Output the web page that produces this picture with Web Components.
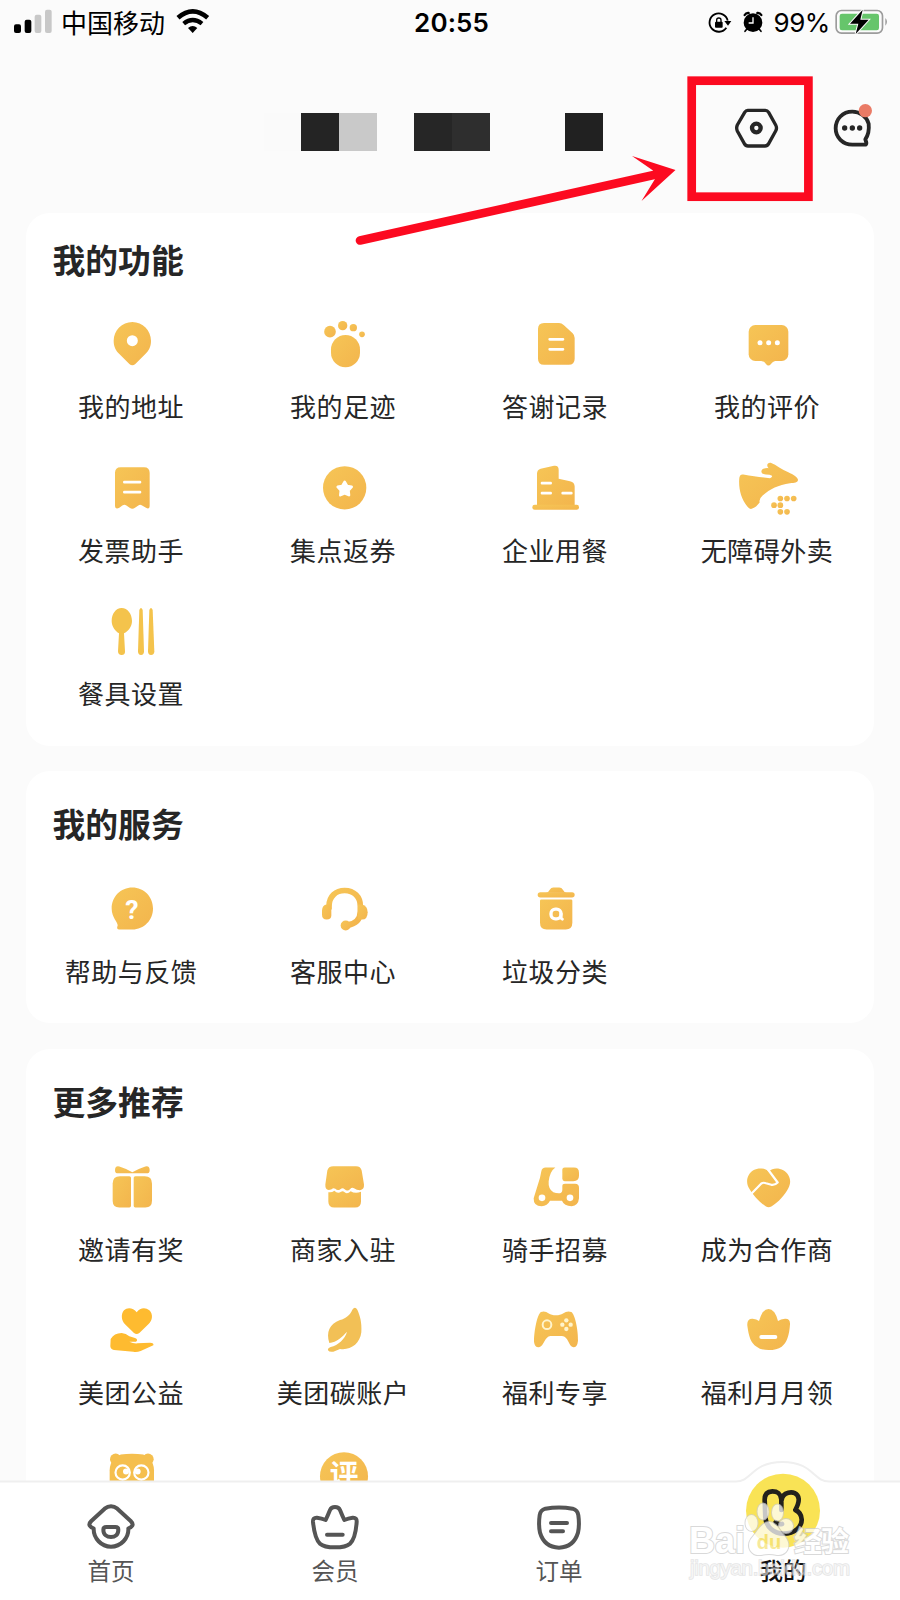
<!DOCTYPE html>
<html lang="zh-CN">
<head>
<meta charset="utf-8">
<title>我的</title>
<style>
  html, body {
    margin: 0;
    background: #fbfbfb;
  }

  body {
    font-family: "Noto Sans CJK SC", sans-serif;
    color: #262626;
  }
</style>
</head>
<body>
<profile-page>
  <status-bar slot="status" carrier="中国移动" time="20:55" battery="99%"></status-bar>
  <profile-header slot="header"></profile-header>

  <menu-card heading="我的功能" style="--card-top: 22px">
    <menu-item icon="pin">我的地址</menu-item>
    <menu-item icon="foot">我的足迹</menu-item>
    <menu-item icon="note">答谢记录</menu-item>
    <menu-item icon="comment">我的评价</menu-item>
    <menu-item icon="invoice">发票助手</menu-item>
    <menu-item icon="coin">集点返券</menu-item>
    <menu-item icon="building">企业用餐</menu-item>
    <menu-item icon="access">无障碍外卖</menu-item>
    <menu-item icon="utensils">餐具设置</menu-item>
  </menu-card>

  <menu-card heading="我的服务">
    <menu-item icon="help">帮助与反馈</menu-item>
    <menu-item icon="headset">客服中心</menu-item>
    <menu-item icon="trash">垃圾分类</menu-item>
  </menu-card>

  <menu-card heading="更多推荐">
    <menu-item icon="gift">邀请有奖</menu-item>
    <menu-item icon="shop">商家入驻</menu-item>
    <menu-item icon="scooter">骑手招募</menu-item>
    <menu-item icon="heart">成为合作商</menu-item>
    <menu-item icon="charity">美团公益</menu-item>
    <menu-item icon="leaf">美团碳账户</menu-item>
    <menu-item icon="gamepad">福利专享</menu-item>
    <menu-item icon="crown">福利月月领</menu-item>
    <menu-item icon="panda"></menu-item>
    <menu-item icon="review"></menu-item>
  </menu-card>

  <tab-bar slot="tabs">
    <tab-item icon="home">首页</tab-item>
    <tab-item icon="member">会员</tab-item>
    <tab-item icon="order">订单</tab-item>
    <tab-item icon="mine" active>我的</tab-item>
  </tab-bar>

  <pointer-note slot="overlay"></pointer-note>
  <site-watermark slot="overlay"></site-watermark>
</profile-page>

<script>
// name: [viewBox, markup]. Shapes take the golden gradient unless they set a fill.
const ICONS = {
  pin: ["180 36 192 192", `
    <path d="M277 66C246 66 221 91 221 122C221 140 228 152 238 162L268 192Q277 200 286 192L316 162C326 152 333 140 333 122C333 91 308 66 277 66Z"/>
    <circle cx="277" cy="122" r="16.5" fill="#fff"/>`],
  foot: ["816 36 192 192", `
    <circle cx="870" cy="95" r="17.5"/><circle cx="908" cy="77" r="14"/>
    <circle cx="940" cy="83" r="11"/><circle cx="966" cy="103" r="8.5"/>
    <rect x="873" y="105" width="87" height="97" rx="43.5"/>`],
  note: ["192 36 192 192", `
    <path d="M252 69H297Q305 69 311 75L338 100Q344 106 344 114V176Q344 194 326 194H252Q234 194 234 176V87Q234 69 252 69Z"/>
    <path d="M269 118H309M269 148H309" class="cut" stroke-width="8"/>`],
  comment: ["828 36 192 192", `
    <rect x="866" y="75" width="119" height="108" rx="20"/>
    <path d="M900 182Q912 183 918 192Q925 201 933 192Q938 183 952 182Z"/>
    <g fill="#fff"><circle cx="900" cy="128" r="7.5"/><circle cx="926" cy="128" r="7.5"/><circle cx="952" cy="128" r="7.5"/></g>`],
  invoice: ["180 466.5 192 192", `
    <path d="M242 500H312Q329 500 329 517V615Q329 628 318 622L305 614Q300 611 295 615L285 622Q277 628 269 622L258 614Q253 611 247 615L238 622Q225 628 225 615V517Q225 500 242 500Z"/>
    <path d="M253 545H300M253 575H300" class="cut" stroke-width="8"/>`],
  coin: ["816 466.5 192 192", `
    <circle cx="914" cy="562" r="65"/>
    <path d="M914 544L921 556.3L934.9 559.2L925.4 569.7L926.9 583.8L914 578L901.1 583.8L902.6 569.7L893.1 559.2L907 556.3Z" fill="#fff" stroke="#fff" stroke-width="8" stroke-linejoin="round"/>`],
  building: ["192 466.5 192 192", `
    <path d="M231 616V520Q231 508 242 505L282 496Q296 494 296 508V535L330 542Q344 545 344 558V616Z"/>
    <rect x="217" y="613" width="140" height="15" rx="7"/>
    <path d="M246 548H272M246 578H272M308 578H334" class="cut" stroke-width="8"/>`],
  access: ["828 466.5 192 192", `
    <path d="M850 522C880 528 905 530 930 533Q938 530 936 526Q930 522 918 522C903 522 900 510 910 505Q918 502 926 503C918 494 922 486 932 487C950 494 965 508 985 515C1000 522 1014 530 1014 538C1014 546 1003 548 990 548C955 553 930 565 908 585Q896 595 899 606C892 615 885 622 875 625Q868 627 862 618C842 595 835 560 838 532Q840 520 850 522Z"/>
    <circle cx="961" cy="594" r="8.5"/><circle cx="981" cy="594" r="8.5"/><circle cx="1001" cy="594" r="8.5"/>
    <circle cx="942" cy="614" r="8.5"/><circle cx="961" cy="614" r="8.5"/>
    <circle cx="961" cy="634" r="8.5"/><circle cx="981" cy="634" r="8.5"/>`],
  utensils: ["240 27 192 192", `
    <g fill="#f4c34c">
      <path d="M305 54C287 54 275 72 275 93C275 110 286 124 297 130L294 184Q294 195 305 195Q316 195 315 184L312 130C325 124 336 110 336 93C336 72 323 54 305 54Z"/>
      <path d="M358 60Q363 48 368 60L372 184Q372 195 363 195Q354 195 354 184Z"/>
      <path d="M388 60Q393 48 398 60L403 184Q403 195 393 195Q384 195 384 184Z"/>
    </g>`],
  help: ["180 52.5 192 192", `
    <path d="M277 84C312 84 339 112 339 147C339 182 312 210 277 210H238Q228 210 233 198C234 188 215 175 215 147C215 112 242 84 277 84Z"/>
    <text x="276" y="179" font-family="Roboto, sans-serif" font-weight="700" font-size="80" text-anchor="middle" fill="#fff">?</text>`],
  headset: ["816 52.5 192 192", `
    <path d="M867 150V140C867 110 888 93 914 93C942 93 961 112 961 140V155C961 182 945 194 920 197" fill="none" stroke="url(#gold)" stroke-width="17"/>
    <path d="M846 152Q847 137 860 135H874V168Q874 180 860 180Q846 180 846 166Z"/>
    <path d="M954 135H966Q983 140 983 158Q983 180 966 180H954Z"/>
    <circle cx="917" cy="198" r="15"/>`],
  trash: ["1452 52.5 192 192", `
    <rect x="1493" y="98" width="111" height="16" rx="8"/>
    <path d="M1518 100Q1526 98 1530 90Q1533 84 1540 84H1558Q1565 84 1568 90Q1572 98 1580 100Z"/>
    <path d="M1504 120H1593Q1597 120 1597 124V190Q1597 210 1577 210H1520Q1500 210 1500 190V124Q1500 120 1504 120Z"/>
    <rect x="1533" y="149" width="30" height="29" rx="13" fill="none" stroke="#fff" stroke-width="10"/>
    <path d="M1563 162V176L1567 179" class="cut" stroke-width="9"/>`],
  gift: ["180 46.5 192 192", `
    <path d="M240 101Q225 104 225 92Q225 78 238 81Q260 88 277 98Q295 88 316 81Q329 78 329 92Q329 104 314 101Z"/>
    <path d="M240 110H268Q273 110 273 115V199Q273 204 268 204H238Q218 204 218 184V132Q218 110 240 110Z"/>
    <path d="M314 110H286Q281 110 281 115V199Q281 204 286 204H316Q336 204 336 184V132Q336 110 314 110Z"/>`],
  shop: ["816 46.5 192 192", `
    <path d="M880 80H948Q962 80 965 93L972 135Q973 150 960 152Q950 152 942 146Q935 143 930 149Q922 157 914 149Q908 144 901 149Q893 155 886 148Q880 144 875 149Q855 157 856 135L862 93Q865 80 880 80Z"/>
    <path d="M865 158Q875 160 883 154Q893 164 903 157Q908 153 914 158Q922 165 932 155Q945 164 963 157V186Q963 204 945 204H883Q865 204 865 186Z"/>`],
  scooter: ["192 46.5 192 192", `
    <path d="M257 84H286Q270 95 266 125Q264 148 280 158Q290 162 300 161Q307 160 307 150V140Q307 133 315 133H345Q357 133 357 145V176Q355 198 335 200Q312 200 306 184H270Q262 200 245 200Q220 200 221 176L240 115L244 95Q246 84 257 84Z"/>
    <path d="M307 90Q307 84 314 84H342Q357 84 357 100V108Q357 125 340 125H314Q307 125 307 118Z"/>
    <circle cx="246" cy="175" r="10" fill="#fff"/><circle cx="330" cy="175" r="10" fill="#fff"/>`],
  heart: ["828 46.5 192 192", `
    <path d="M926 96C915 85 895 84 880 92C860 104 856 130 868 148C880 168 900 190 918 201Q926 205 934 201C955 188 975 166 985 146C996 126 990 104 970 92C955 84 937 85 926 96Z"/>
    <path d="M874 163L904 132Q910 128 918 131L934 136Q944 138 953 129L924 90" class="cut" stroke-width="6.500"/>`],
  charity: ["180 477 192 192", `
    <g fill="#febb30">
      <path d="M290 520C280 506 262 504 252 514C242 526 244 545 255 556L282 582Q290 588 298 582L325 556C338 545 340 526 328 514C316 504 300 506 290 520Z"/>
      <path d="M212 600Q222 582 245 582Q258 583 268 592L285 597Q296 602 288 608H268Q280 614 292 613L330 611Q343 612 340 619L302 636Q290 640 280 638L222 633Q212 632 211 622Z"/>
    </g>`],
  leaf: ["816 477 192 192", `
    <path fill="#f2c056" d="M937 512Q945 500 952 512C960 530 966 550 964 580C960 615 930 635 900 630L880 638Q868 640 864 634Q862 628 872 624C895 618 915 600 921 578C908 592 890 610 868 612C858 580 868 555 900 543C918 538 930 528 937 512Z"/>`],
  gamepad: ["192 477 192 192", `
    <path d="M243 519C260 512 265 529 288 529C310 529 316 512 334 519C345 525 355 575 354 605Q352 625 340 625C325 622 325 590 305 591H272C255 590 252 622 237 625Q224 626 222 608C222 575 232 525 243 519Z"/>
    <circle cx="261" cy="557" r="13" fill="none" stroke="#fff4cc" stroke-width="6"/>
    <g fill="#fff4cc"><circle cx="319" cy="544" r="6.5"/><circle cx="319" cy="570" r="6.5"/><circle cx="307" cy="557" r="6.500"/><circle cx="332" cy="557" r="6.500"/></g>`],
  crown: ["828 477 192 192", `
    <path d="M862 560Q860 538 878 539Q890 540 897 546Q902 530 908 520Q926 500 943 520Q950 530 954 546Q962 540 975 539Q991 538 990 556C988 590 980 612 965 623Q950 633 926 633Q902 633 890 623C872 612 866 590 862 560Z"/>
    <path d="M904 594H946" class="cut" stroke-width="12"/>`],
  panda: ["300 37.5 192 192", `
    <g fill="#f5bf4e">
      <circle cx="347" cy="89" r="17"/><circle cx="444" cy="89" r="17"/>
      <path d="M329 200V122Q329 104 340 90L362 75Q396 70 430 75L451 90Q462 104 462 122V200Z"/>
    </g>
    <g fill="none" stroke="#fff" stroke-width="6.500"><circle cx="368" cy="129" r="21.500"/><circle cx="424" cy="129" r="21.500"/></g>
    <circle cx="378" cy="126" r="9" fill="#fff"/><circle cx="413" cy="126" r="9" fill="#fff"/>`],
  review: ["936 37.5 192 192", `
    <circle cx="1032" cy="140" r="72"/>
    <text x="1032" y="166" font-weight="700" font-size="86" text-anchor="middle" fill="#fff">评</text>`],

  home: ["243 198 180 180", `
    <g fill="none" stroke="#555" stroke-width="12" stroke-linejoin="round">
      <path d="M333 229Q343 229 352 236L392 273Q401 282 396 288Q393 293 385 295C387 325 362 350 333 350C304 350 280 325 281 295Q273 293 270 288Q265 282 274 273L314 236Q323 229 333 229Z"/>
      <path d="M319 291H346Q355 291 355 299C355 314 345 321 333 321C321 321 310 314 310 299Q310 291 319 291Z"/>
    </g>`],
  member: ["915 198 180 180", `
    <g fill="none" stroke="#555" stroke-width="12" stroke-linejoin="round" stroke-linecap="round">
      <path d="M1005 231Q1016 231 1020 240Q1026 255 1033 270Q1045 265 1058 263Q1071 262 1070 276C1068 305 1062 330 1050 341Q1038 352 1005 352Q972 352 960 341C948 330 942 305 939 276Q938 262 951 263Q965 265 977 270Q984 255 990 240Q994 231 1005 231Z"/>
      <path d="M981 314H1028"/>
    </g>`],
  order: ["236 198 180 180", `
    <g fill="none" stroke="#555" stroke-width="12" stroke-linecap="round">
      <path d="M285 236Q326 229 367 236Q382 240 384 256Q388 285 383 308Q370 352 326 353Q282 352 269 308Q264 285 268 256Q270 240 285 236Z"/>
      <path d="M302 279H350M302 304H338"/>
    </g>`],
  mine: ["908 198 180 180", `
    <circle cx="998" cy="242" r="111" fill="#f9e355"/>
    <g fill="none" stroke="#22211c" stroke-width="14" stroke-linecap="round" stroke-linejoin="round">
      <path d="M993 240V208C990 190 982 184 966 184C950 184 943 194 943 209L945 262C947 290 970 311 1000 311C1034 311 1055 290 1054 268C1053 254 1047 245 1035 240C1043 225 1046 215 1045 206C1043 188 1026 185 1014 188C1002 191 995 198 994 210"/>
      <path d="M976 277Q985 285 995 282"/>
    </g>`],

  signal: ["42 27 114 75", `
    <rect x="42" y="73" width="21" height="26" rx="6" fill="#000"/>
    <rect x="74" y="59" width="20" height="40" rx="6" fill="#000"/>
    <rect x="104" y="44" width="20" height="55" rx="6" fill="#c8c8c8"/>
    <rect x="135" y="29" width="20" height="70" rx="6" fill="#c8c8c8"/>`],
  wifi: ["528 24 102 78", `
    <g fill="none" stroke="#000">
      <path d="M534 53Q578 15 623 53" stroke-width="14"/>
      <path d="M551 71Q578 49 606 71" stroke-width="13"/>
    </g>
    <path d="M564 84Q578 72 592 84L578 99Z" fill="#000"/>`],
  lock: ["774 33 72 72", `
    <path d="M829 83A27.500 27.500 0 1 1 833 62" fill="none" stroke="#000" stroke-width="5.500"/>
    <path d="M823 63H844L834 77Z" fill="#000"/>
    <rect x="795" y="65" width="23" height="18" rx="3" fill="#000"/>
    <path d="M800 66V60Q800 54 806.500 54Q813 54 813 60V66" fill="none" stroke="#000" stroke-width="4"/>`],
  alarm: ["876 33 66 66", `
    <circle cx="909" cy="68" r="28" fill="#000"/>
    <g fill="none" stroke="#000" stroke-width="7" stroke-linecap="round"><path d="M884 45Q888 38 896 39M934 45Q930 38 922 39"/><path d="M890 88L885 94M928 88L933 94" stroke-width="5"/></g>
    <path d="M909 52V69H896" fill="none" stroke="#fff" stroke-width="4"/>`],
  battery: ["1155 24 162 81", `
    <rect x="1158.500" y="31.500" width="139" height="68" rx="16" fill="none" stroke="#9c9c9c" stroke-width="5"/>
    <rect x="1169" y="41" width="118" height="50" rx="7" fill="#66c56b"/>
    <path d="M1306 54Q1316 65 1306 77Z" fill="#9c9c9c"/>
    <path d="M1238 29L1200 71H1225L1217 102L1256 59H1231Z" fill="#000" stroke="#fbfbfb" stroke-width="6" paint-order="stroke"/>`],
  settings: ["854 321 132 126", `
    <path d="M892 331H945Q951 331 955 337L976 375Q981 384 976 393L955 431Q951 438 944 438H893Q886 438 882 431L861 393Q857 384 861 375L883 337Q887 331 892 331Z" fill="none" stroke="#262626" stroke-width="10"/>
    <circle cx="918" cy="384" r="13" fill="none" stroke="#262626" stroke-width="13"/>`],
  message: ["1149 309 120 135", `
    <path d="M1256 371C1250 350 1230 335 1207 335C1178 335 1157 357 1157 385C1157 412 1178 434 1207 434H1244Q1250 434 1249 428L1246 418C1255 405 1258 390 1256 371Z" fill="none" stroke="#262626" stroke-width="11.500" stroke-linejoin="round"/>
    <circle cx="1184" cy="384" r="8" fill="#262626"/><circle cx="1207" cy="384" r="8" fill="#262626"/><circle cx="1229" cy="384" r="8" fill="#262626"/>
    <circle cx="1246" cy="332" r="20" fill="#ea7b66"/>`],
};

class AppIcon extends HTMLElement {
  connectedCallback() {
    const [viewBox, markup] = ICONS[this.getAttribute("name")];
    this.attachShadow({ mode: "open" }).innerHTML = `
      <style>
        :host {
          display: block;
          flex: none;
        }

        svg {
          display: block;
          width: 100%;
          height: 100%;
          overflow: visible;
        }

        .cut {
          fill: none;
          stroke: #fff;
          stroke-linecap: round;
          stroke-linejoin: round;
        }
      </style>
      <svg viewBox="${viewBox}" fill="url(#gold)" aria-hidden="true">
        <defs>
          <linearGradient id="gold" x1="0" y1="0" x2="1" y2="1">
            <stop offset="0" stop-color="#f6c556"/>
            <stop offset="1" stop-color="#f3b54d"/>
          </linearGradient>
        </defs>
        ${markup}
      </svg>
    `;
  }
}

class ProfilePage extends HTMLElement {
  constructor() {
    super();
    this.attachShadow({ mode: "open" }).innerHTML = `
      <style>
        :host {
          position: relative;
          display: flex;
          flex-direction: column;
          width: 900px;
          height: 1600px;
          overflow: hidden;
          background: #fbfbfb;
        }

        main {
          display: flex;
          flex: 1;
          flex-direction: column;
          gap: 25.75px;
          min-height: 0;
          padding: 0 26px;
          overflow: hidden;
        }
      </style>
      <slot name="status"></slot>
      <slot name="header"></slot>
      <main><slot></slot></main>
      <slot name="tabs"></slot>
      <slot name="overlay"></slot>
    `;
  }
}

class StatusBar extends HTMLElement {
  connectedCallback() {
    this.attachShadow({ mode: "open" }).innerHTML = `
      <style>
        :host {
          display: grid;
          grid-template-columns: 1fr auto 1fr;
          align-items: center;
          flex: none;
          height: 46px;
          padding: 0 11px 0 14px;
          box-sizing: border-box;
          color: #000;
          line-height: 46px;
        }

        div {
          display: flex;
          align-items: center;
        }

        .carrier {
          margin: -2px 11px 0 9px;
          font-size: 26px;
        }

        .time {
          font: 600 26px/46px Inter, sans-serif;
          letter-spacing: 0.1px;
        }

        .end {
          justify-content: flex-end;
        }

        .level {
          margin: 0 5px 0 9px;
          font: 400 26px/46px Inter, sans-serif;
          letter-spacing: -0.4px;
        }
      </style>
      <div>
        <app-icon name="signal" style="width: 38px; height: 25px; margin-top: -3px"></app-icon>
        <span class="carrier">${this.getAttribute("carrier")}</span>
        <app-icon name="wifi" style="width: 34px; height: 26px; margin-top: -4px"></app-icon>
      </div>
      <span class="time">${this.getAttribute("time")}</span>
      <div class="end">
        <app-icon name="lock" style="width: 24px; height: 24px"></app-icon>
        <app-icon name="alarm" style="width: 22px; height: 22px; margin-left: 10px; margin-top: -2px"></app-icon>
        <span class="level">${this.getAttribute("battery")}</span>
        <app-icon name="battery" style="width: 54px; height: 27px; margin-top: -3px"></app-icon>
      </div>
    `;
  }
}

class ProfileHeader extends HTMLElement {
  connectedCallback() {
    // pixelated name, one entry per tile
    const tiles = ["#fafafa", "#242424", "#c9c9c9", "", "#262626", "#2e2e2e", "", "", "#212121"];
    this.attachShadow({ mode: "open" }).innerHTML = `
      <style>
        :host {
          display: flex;
          flex: none;
          align-items: flex-start;
          height: 166.5px;
          padding: 57px 0 0 263.5px;
          box-sizing: border-box;
        }

        .name {
          display: flex;
          margin-top: 10px;
        }

        .name i {
          width: 37.7px;
          height: 38px;
        }
      </style>
      <div class="name">${tiles.map((c) => `<i style="background: ${c || "none"}"></i>`).join("")}</div>
      <app-icon name="settings" style="width: 44px; height: 42px; margin: 4px 0 0 132px"></app-icon>
      <app-icon name="message" style="width: 40px; height: 45px; margin-left: 54px"></app-icon>
    `;
  }
}

class MenuCard extends HTMLElement {
  connectedCallback() {
    this.attachShadow({ mode: "open" }).innerHTML = `
      <style>
        :host {
          display: block;
          flex: none;
          padding: var(--card-top, 28px) 0 33.5px;
          background: #fff;
          border-radius: 24px;
        }

        h2 {
          margin: 0 0 29.5px 26.5px;
          font-size: 32.8px;
          font-weight: 700;
          line-height: 48px;
        }

        .grid {
          display: grid;
          grid-template-columns: repeat(4, 1fr);
          row-gap: 30.5px;
        }
      </style>
      <h2>${this.getAttribute("heading")}</h2>
      <div class="grid"><slot></slot></div>
    `;
  }
}

class MenuItem extends HTMLElement {
  connectedCallback() {
    this.attachShadow({ mode: "open" }).innerHTML = `
      <style>
        :host {
          display: flex;
          flex-direction: column;
          align-items: center;
          gap: 11px;
        }

        app-icon {
          width: 64px;
          height: 64px;
        }

        span {
          height: 38px;
          padding-right: 2px;
          font-size: 26px;
          line-height: 37px;
          letter-spacing: 0.5px;
          white-space: nowrap;
        }
      </style>
      <app-icon name="${this.getAttribute("icon")}"></app-icon>
      <span><slot></slot></span>
    `;
  }
}

class TabBar extends HTMLElement {
  connectedCallback() {
    this.attachShadow({ mode: "open" }).innerHTML = `
      <style>
        :host {
          position: relative;
          display: block;
          flex: none;
          height: 119px;
          background: #fff;
        }

        .edge {
          position: absolute;
          left: 0;
          top: -22px;
        }

        nav {
          position: relative;
          display: grid;
          grid-template-columns: repeat(4, 224px);
          margin-left: -1px;
          padding-top: 15px;
        }
      </style>
      <svg class="edge" width="900" height="30" viewBox="0 1459 900 30" aria-hidden="true">
        <path d="M-2 1481.500H736C752 1481.500 752 1462 782.500 1462C813 1462 813 1481.500 829 1481.500H902V1495H-2Z" fill="#fff" stroke="#efefef" stroke-width="2"/>
      </svg>
      <nav><slot></slot></nav>
    `;
  }
}

class TabItem extends HTMLElement {
  connectedCallback() {
    this.attachShadow({ mode: "open" }).innerHTML = `
      <style>
        :host {
          display: flex;
          flex-direction: column;
          align-items: center;
          color: #555;
        }

        :host([active]) {
          color: #111;
          font-weight: 500;
        }

        app-icon {
          width: 60px;
          height: 60px;
        }

        span {
          font-size: 23.5px;
          line-height: 28px;
        }
      </style>
      <app-icon name="${this.getAttribute("icon")}"></app-icon>
      <span><slot></slot></span>
    `;
  }
}

class PointerNote extends HTMLElement {
  connectedCallback() {
    this.attachShadow({ mode: "open" }).innerHTML = `
      <style>
        :host {
          position: absolute;
          left: 350px;
          top: 70px;
          pointer-events: none;
        }

        svg {
          display: block;
        }
      </style>
      <svg width="470" height="180" viewBox="350 70 470 180" aria-hidden="true">
        <rect x="691.700" y="80.700" width="116.700" height="116" fill="none" stroke="#fc0a20" stroke-width="8.700"/>
        <path d="M360 240.500L656 174.500" stroke="#fc0a20" stroke-width="8.600" stroke-linecap="round"/>
        <path d="M632 156L675.500 170L641.500 201L655 179L653 170.500Z" fill="#fc0a20"/>
      </svg>
    `;
  }
}

class SiteWatermark extends HTMLElement {
  connectedCallback() {
    this.attachShadow({ mode: "open" }).innerHTML = `
      <style>
        :host {
          position: absolute;
          left: 680px;
          top: 1490px;
          opacity: 0.75;
          pointer-events: none;
        }

        svg {
          display: block;
        }

        text,
        .paw {
          fill: #fff;
          stroke: #cdcdcd;
          stroke-width: 2px;
          paint-order: stroke;
        }
      </style>
      <svg width="180" height="100" viewBox="680 1490 180 100">
        <text x="689" y="1553" font-family="Liberation Sans, sans-serif" font-weight="700" font-size="36" textLength="56">Bai</text>
        <g class="paw">
          <ellipse cx="751.500" cy="1523" rx="6" ry="8"/>
          <ellipse cx="763" cy="1511.500" rx="5.500" ry="8"/>
          <ellipse cx="777.500" cy="1512.500" rx="5.500" ry="8"/>
          <ellipse cx="786" cy="1526" rx="7" ry="7"/>
          <path d="M769 1522C776 1522 780 1531 786 1538C792 1547 786 1556 777 1555Q769 1553 761 1555C751 1556 746 1547 751 1539C757 1532 762 1522 769 1522Z"/>
        </g>
        <text x="769" y="1549" font-family="Liberation Sans, sans-serif" font-weight="700" font-size="20" text-anchor="middle" style="fill: #f5e27a; stroke: none">du</text>
        <text x="794" y="1552" font-weight="700" font-size="28" textLength="55">经验</text>
        <text x="690" y="1575" font-family="Liberation Sans, sans-serif" font-size="20.500" textLength="160" style="stroke-width: 1.5px; fill-opacity: 0.6; stroke-opacity: 0.7">jingyan.baidu.com</text>
      </svg>
    `;
  }
}

customElements.define("app-icon", AppIcon);
customElements.define("profile-page", ProfilePage);
customElements.define("status-bar", StatusBar);
customElements.define("profile-header", ProfileHeader);
customElements.define("menu-card", MenuCard);
customElements.define("menu-item", MenuItem);
customElements.define("tab-bar", TabBar);
customElements.define("tab-item", TabItem);
customElements.define("pointer-note", PointerNote);
customElements.define("site-watermark", SiteWatermark);
</script>
</body>
</html>
